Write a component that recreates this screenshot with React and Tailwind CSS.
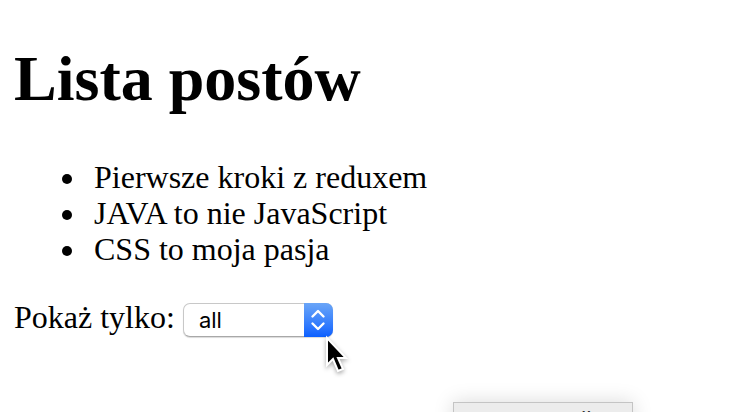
const posts = ['Pierwsze kroki z reduxem', 'JAVA to nie JavaScript', 'CSS to moja pasja'];

function PostFilter() {
  return (
    <div className="flex items-baseline gap-2 pt-8">
      <label htmlFor="post-filter">Pokaż tylko:</label>
      <div className="relative">
        <select
          id="post-filter"
          className="block h-[34px] w-[150px] appearance-none rounded-[7px] border border-[#c8c8c8] border-b-[#a8a8a8] bg-white pl-[15px] pr-8 font-['Inter',sans-serif] text-[22px] leading-8 text-black shadow-[0_1px_1px_#00000026]"
        >
          <option>all</option>
        </select>
        <span className="pointer-events-none absolute inset-y-0 right-0 flex w-[29px] items-center justify-center rounded-r-[7px] bg-linear-to-b from-[#6aa5f7] to-[#0a5fff]">
          <svg width="16" height="22" viewBox="0 0 16 22" fill="none" stroke="white" strokeWidth="2.4" strokeLinecap="round" strokeLinejoin="round">
            <path d="M2.500 7.500 8 2l5.500 5.500M2.500 14.500 8 20l5.500-5.500" />
          </svg>
        </span>
        <svg className="pointer-events-none absolute top-[31px] left-[140px] drop-shadow-[0_2px_2px_#00000055]" width="26" height="40" viewBox="0 0 26 40">
          <path d="M4 4v27l6-6 5 12 5-2-5-11h8Z" fill="black" stroke="white" strokeWidth="2" />
        </svg>
      </div>
    </div>
  );
}

export default function App() {
  return (
    <main className="relative h-screen overflow-hidden bg-white px-3.5 pt-[43px] font-['Liberation_Serif',serif] text-[32px] leading-9 text-black">
      <h1 className="text-[64px] leading-[72px] font-bold">Lista postów</h1>
      <ul className="mt-11 pl-12">
        {posts.map((post) => (
          <li key={post} className="flex items-center gap-[22px] before:mt-1 before:size-2.5 before:rounded-full before:bg-black">
            {post}
          </li>
        ))}
      </ul>
      <PostFilter />
      <div className="absolute top-[402px] left-[453px] h-10 w-[180px] border border-[#c4c4c4] bg-[#ececec] pl-[127px] font-['Inter',sans-serif] text-[22px] leading-8 text-[#333333] shadow-[0_0_20px_#00000026]">
        ll
      </div>
    </main>
  );
}
